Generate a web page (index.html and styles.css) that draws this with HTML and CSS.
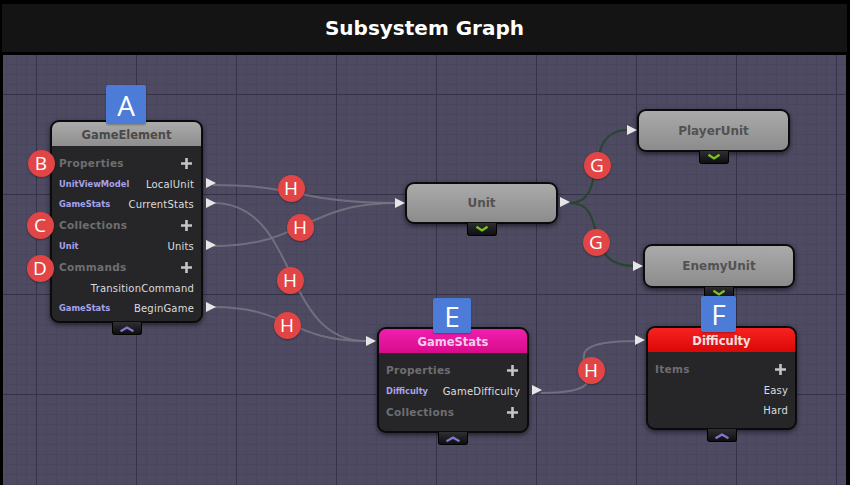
FILE: index.html
```html
<!DOCTYPE html>
<html lang="en">
<head>
    <meta charset="UTF-8">
    <meta name="viewport" content="width=device-width, initial-scale=1.0">
    <title>Subsystem Graph</title>
    <link rel="stylesheet" href="styles.css">
</head>
<body>
    <div class="frame">
        <header class="titlebar">
            <h1>Subsystem Graph</h1>
        </header>

        <main class="canvas">
            <!-- connections, drawn in page coordinates -->
            <svg class="wires" viewBox="3 55 843 430" width="843" height="430">
                <g class="wire">
                    <path d="M213,185 C300,185 300,203 396,203"/>
                    <path d="M213,246 C305,246 305,203 396,203"/>
                    <path d="M213,203 C300,203 280,341 366,341"/>
                    <path d="M213,307 C290,307 290,341 366,341"/>
                    <path d="M541,393 C650,393 520,341 636,341"/>
                </g>
                <g class="wire green">
                    <path d="M570,203 C610,203 580,130 628,130"/>
                    <path d="M570,203 C610,203 580,266 634,266"/>
                </g>
            </svg>

            <!-- GameElement -->
            <div class="node node-element">
                <div class="node-head">GameElement</div>
                <div class="node-body">
                    <div class="section"><span>Properties</span><svg class="plus" viewBox="0 0 11 11"><path d="M5.5 0v11M0 5.5h11"/></svg></div>
                    <div class="item"><span class="type">UnitViewModel</span><span class="name">LocalUnit</span><i class="out"></i></div>
                    <div class="item"><span class="type">GameStats</span><span class="name">CurrentStats</span><i class="out"></i></div>
                    <div class="section"><span>Collections</span><svg class="plus" viewBox="0 0 11 11"><path d="M5.5 0v11M0 5.5h11"/></svg></div>
                    <div class="item"><span class="type">Unit</span><span class="name">Units</span><i class="out"></i></div>
                    <div class="section"><span>Commands</span><svg class="plus" viewBox="0 0 11 11"><path d="M5.5 0v11M0 5.5h11"/></svg></div>
                    <div class="item end"><span class="name">TransitionCommand</span></div>
                    <div class="item"><span class="type">GameStats</span><span class="name">BeginGame</span><i class="out"></i></div>
                </div>
                <div class="tab"><svg viewBox="0 0 30 13"><path d="M8 10 L15 6 L22 10"/></svg></div>
            </div>

            <!-- Unit -->
            <div class="node plain node-unit">
                Unit
                <i class="in"></i>
                <i class="out"></i>
                <div class="tab"><svg viewBox="0 0 30 13"><path class="down" d="M9 4 L15 8 L21 4"/></svg></div>
            </div>

            <div class="node plain node-player">
                PlayerUnit
                <i class="in"></i>
                <div class="tab"><svg viewBox="0 0 30 13"><path class="down" d="M9 4 L15 8 L21 4"/></svg></div>
            </div>

            <div class="node plain node-enemy">
                EnemyUnit
                <i class="in"></i>
                <div class="tab"><svg viewBox="0 0 30 13"><path class="down" d="M9 4 L15 8 L21 4"/></svg></div>
            </div>

            <!-- GameStats -->
            <div class="node node-stats">
                <i class="in head-in"></i>
                <div class="node-head magenta">GameStats</div>
                <div class="node-body">
                    <div class="section"><span>Properties</span><svg class="plus" viewBox="0 0 11 11"><path d="M5.5 0v11M0 5.5h11"/></svg></div>
                    <div class="item"><span class="type">Difficulty</span><span class="name">GameDifficulty</span><i class="out"></i></div>
                    <div class="section"><span>Collections</span><svg class="plus" viewBox="0 0 11 11"><path d="M5.5 0v11M0 5.5h11"/></svg></div>
                </div>
                <div class="tab"><svg viewBox="0 0 30 13"><path d="M8 10 L15 6 L22 10"/></svg></div>
            </div>

            <!-- Difficulty -->
            <div class="node node-difficulty">
                <i class="in head-in"></i>
                <div class="node-head red">Difficulty</div>
                <div class="node-body">
                    <div class="section"><span>Items</span><svg class="plus" viewBox="0 0 11 11"><path d="M5.5 0v11M0 5.5h11"/></svg></div>
                    <div class="item end"><span class="name">Easy</span></div>
                    <div class="item end"><span class="name">Hard</span></div>
                </div>
                <div class="tab"><svg viewBox="0 0 30 13"><path d="M8 10 L15 6 L22 10"/></svg></div>
            </div>

            <!-- callout labels -->
            <div class="label label-a">A</div>
            <div class="label label-e">E</div>
            <div class="label label-f">F</div>

            <div class="pin pin-b">B</div>
            <div class="pin pin-c">C</div>
            <div class="pin pin-d">D</div>
            <div class="pin pin-h1">H</div>
            <div class="pin pin-h2">H</div>
            <div class="pin pin-h3">H</div>
            <div class="pin pin-h4">H</div>
            <div class="pin pin-h5">H</div>
            <div class="pin pin-g1">G</div>
            <div class="pin pin-g2">G</div>
        </main>
    </div>
</body>
</html>
```

FILE: styles.css
```css
:root {
    --canvas: #4e4a62;
    --grid-minor: #49455d;
    --grid-major: #35324a;
    --node-body: #262629;
    --section: #6e6e70;
    --type: #a7a2ea;
    --name: #dddddd;
    --port: #e6e6e6;
    --pin: #e24545;
    --label: #4c7bd8;
}

* {
    box-sizing: border-box;
    margin: 0;
    padding: 0;
}

body {
    width: 850px;
    height: 485px;
    overflow: hidden;
    background: #000;
    font-family: 'DejaVu Sans', sans-serif;
}

.titlebar {
    height: 48px;
    margin: 4px 3px 0 2px;
    background: #141414;
    display: flex;
    align-items: center;
    justify-content: center;
}

.titlebar h1 {
    color: #fff;
    font-size: 20px;
    font-weight: bold;
}

.canvas {
    position: relative;
    height: 430px;
    margin: 3px 4px 0 3px;
    overflow: hidden;
    background-color: var(--canvas);
    background-image:
        linear-gradient(to right, var(--grid-major) 1px, transparent 1px),
        linear-gradient(to bottom, var(--grid-major) 1px, transparent 1px),
        linear-gradient(to right, var(--grid-minor) 1px, transparent 1px),
        linear-gradient(to bottom, var(--grid-minor) 1px, transparent 1px);
    background-size: 100px 100px, 100px 100px, 10px 10px, 10px 10px;
    background-position: 33px 0, 0 39px, 3px 0, 0 9px;
}

.wires {
    position: absolute;
    left: 0;
    top: 0;
}

.wire path {
    fill: none;
    stroke: rgba(120, 118, 132, 0.85);
    stroke-width: 2;
}

.wire.green path {
    stroke: #2a452f;
    stroke-width: 2.2;
}

/* nodes */
.node {
    position: absolute;
    border: 2px solid #0b0b0c;
    border-radius: 9px;
    background: var(--node-body);
    box-shadow: 0 2px 5px rgba(0, 0, 0, 0.55);
}

.node-head {
    height: 24px;
    padding-top: 2px;
    display: flex;
    align-items: center;
    justify-content: center;
    border-radius: 7px 7px 0 0;
    background: linear-gradient(#ababab, #8e8e8e);
    color: #4a4a4a;
    font-size: 11.5px;
    font-weight: bold;
}

.node-head.magenta {
    background: linear-gradient(#f01fae, #d80b8c);
    color: #f4cbe8;
}

.node-head.red {
    background: linear-gradient(#f72222, #dc0707);
    color: #f2e2e2;
}

.node-body {
    padding: 6px 7px 0 7px;
}

.section {
    height: 22px;
    display: flex;
    align-items: center;
    justify-content: space-between;
    color: var(--section);
    font-size: 10.5px;
    font-weight: bold;
    letter-spacing: 0.3px;
}

.plus {
    width: 11px;
    height: 11px;
    margin-right: 2px;
}

.plus path {
    stroke: #c4c4c4;
    stroke-width: 2.6;
}

.item {
    position: relative;
    height: 20px;
    display: flex;
    align-items: center;
    justify-content: space-between;
}

.item.end {
    justify-content: flex-end;
}

.type {
    color: var(--type);
    font-size: 8.3px;
    font-weight: bold;
}

.name {
    color: var(--name);
    font-size: 10px;
    letter-spacing: 0.2px;
}

/* ports */
.in,
.out {
    position: absolute;
    width: 0;
    height: 0;
    border-left: 10px solid var(--port);
    border-top: 5.5px solid transparent;
    border-bottom: 5.5px solid transparent;
}

.item .out {
    right: -22px;
    top: 4px;
}

.plain .in {
    left: -12px;
    top: calc(50% - 5.5px);
}

.plain .out {
    right: -14px;
    top: calc(50% - 6px);
}

.head-in {
    left: -13px;
    top: 7px;
}

.plain {
    display: flex;
    align-items: center;
    justify-content: center;
    background: linear-gradient(#aaaaaa, #8c8c8c);
    color: #525252;
    font-size: 12px;
    font-weight: bold;
}

/* collapse tab */
.tab {
    position: absolute;
    top: calc(100% + 1px);
    left: 50%;
    width: 30px;
    height: 13px;
    margin-left: -15px;
    background: linear-gradient(#2e2e33, #0f0f11);
    border: 1px solid #000;
    border-top: none;
    border-radius: 0 0 3px 3px;
}

.tab svg {
    display: block;
    width: 28px;
    height: 12px;
}

.tab path {
    fill: none;
    stroke: #7d79cc;
    stroke-width: 2.6;
}

.tab path.down {
    stroke: #7cc41c;
}

.node-element { left: 47px; top: 65px; width: 153px; height: 203px; }
.node-unit { left: 402px; top: 127px; width: 153px; height: 42px; }
.node-player { left: 634px; top: 54px; width: 153px; height: 43px; }
.node-enemy { left: 640px; top: 189px; width: 152px; height: 44px; }
.node-stats { left: 374px; top: 272px; width: 152px; height: 106px; }
.node-difficulty { left: 643px; top: 271px; width: 151px; height: 104px; }

/* callouts */
.label {
    position: absolute;
    display: flex;
    align-items: center;
    justify-content: center;
    background: var(--label);
    border-radius: 2px;
    color: #fff;
    font-family: 'Open Sans', sans-serif;
    font-size: 28px;
    box-shadow: 0 1px 2px rgba(0, 0, 0, 0.3);
}

.label-a { left: 103px; top: 30px; width: 40px; height: 39px; }
.label-e { left: 430px; top: 243px; width: 38px; height: 35px; }
.label-f { left: 698px; top: 241px; width: 35px; height: 36px; }

.pin {
    position: absolute;
    width: 27px;
    height: 27px;
    margin: -13.5px 0 0 -13.5px;
    border-radius: 50%;
    background: var(--pin);
    color: #fff;
    font-family: 'Open Sans', sans-serif;
    font-size: 19px;
    display: flex;
    align-items: center;
    justify-content: center;
    box-shadow: 0 1px 2px rgba(0, 0, 0, 0.35);
}

.pin-b { left: 38px; top: 108px; }
.pin-c { left: 37px; top: 170px; }
.pin-d { left: 37px; top: 213px; }
.pin-h1 { left: 288px; top: 133px; }
.pin-h2 { left: 297px; top: 172px; }
.pin-h3 { left: 287px; top: 225px; }
.pin-h4 { left: 284px; top: 270px; }
.pin-h5 { left: 588px; top: 315px; }
.pin-g1 { left: 594px; top: 110px; }
.pin-g2 { left: 593px; top: 187px; }
```
